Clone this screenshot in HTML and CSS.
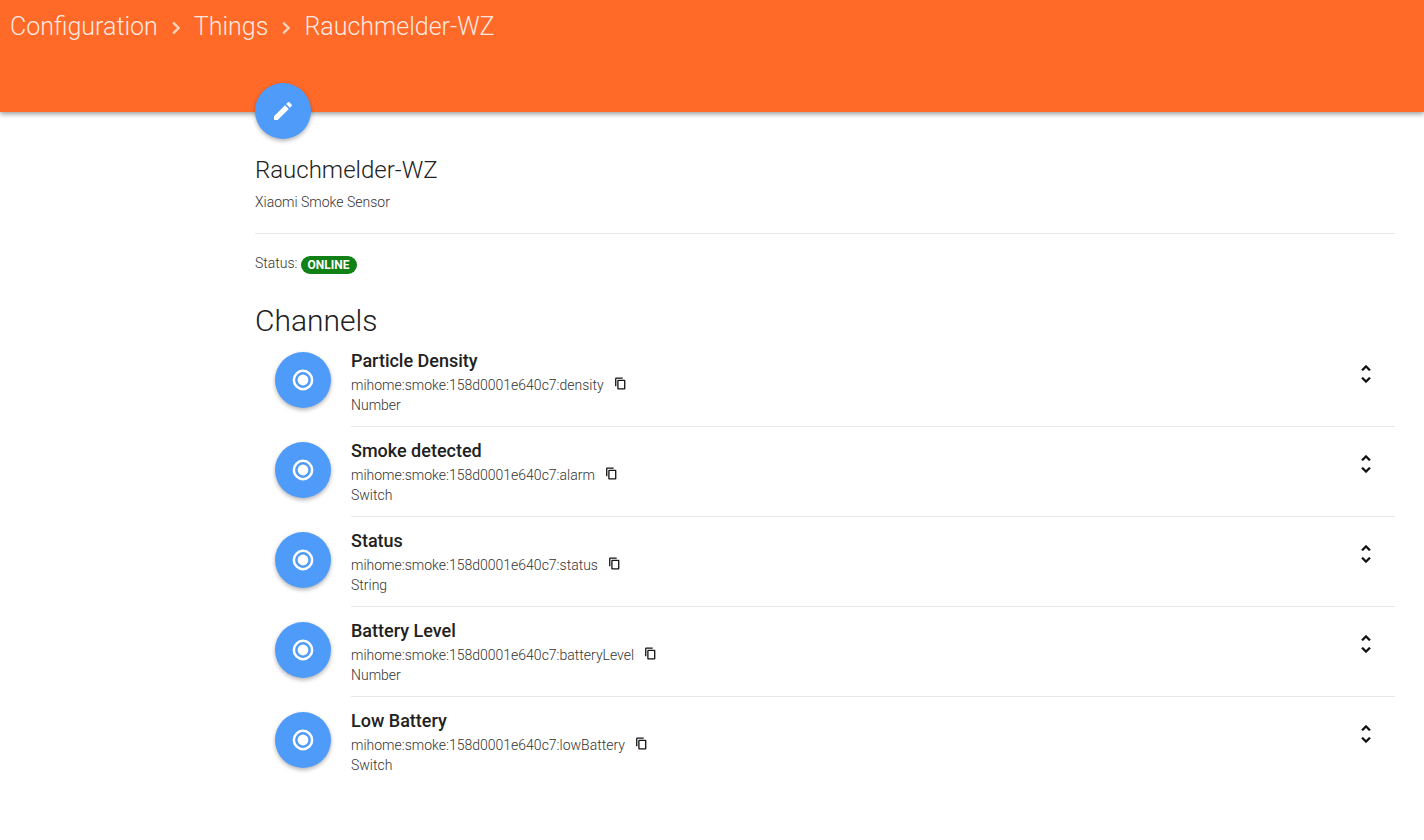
FILE: index.html
```html
<!DOCTYPE html>
<html lang="en">
<head>
<meta charset="utf-8">
<meta name="viewport" content="width=device-width, initial-scale=1">
<title>Rauchmelder-WZ</title>
<link rel="stylesheet" href="styles.css">
</head>
<body>
<svg class="sprite" aria-hidden="true">
  <symbol id="chevron" viewBox="0 0 24 24"><path d="M9.200 6.600l5.400 5.400-5.400 5.400" fill="none" stroke="currentColor" stroke-width="2.400"/></symbol>
  <symbol id="edit" viewBox="0 0 24 24"><path d="M3 17.250V21h3.750L17.810 9.940l-3.750-3.750L3 17.250zM20.710 7.040a1 1 0 0 0 0-1.410l-2.340-2.340a1 1 0 0 0-1.410 0l-1.830 1.830 3.750 3.750 1.830-1.830z"/></symbol>
  <symbol id="radio" viewBox="0 0 24 24"><circle cx="12" cy="12" r="5.400"/><path d="M12 1.600a10.400 10.400 0 1 0 0 20.800 10.400 10.400 0 0 0 0-20.800zm0 18.300a7.900 7.900 0 1 1 0-15.800 7.900 7.900 0 0 1 0 15.800z"/></symbol>
  <symbol id="copy" viewBox="0 0 24 24"><path d="M16 1H4a2 2 0 0 0-2 2v14h2.400V3.400H16V1zm3 4H8a2 2 0 0 0-2 2v14c0 1.100.9 2 2 2h11a2 2 0 0 0 2-2V7a2 2 0 0 0-2-2zm-.4 15.600H8.400V7.400h10.200v13.200z"/></symbol>
  <symbol id="unfold" viewBox="0 0 24 24"><path d="M12 5.830L15.170 9l1.410-1.410L12 3 7.410 7.590 8.830 9 12 5.830zm0 12.340L8.830 15l-1.410 1.410L12 21l4.590-4.590L15.170 15 12 18.170z" stroke="currentColor" stroke-width=".3"/></symbol>
</svg>
<header class="toolbar">
  <nav class="breadcrumb" aria-label="Breadcrumb">
    <a href="#">Configuration</a>
    <svg class="separator"><use href="#chevron"/></svg>
    <a href="#">Things</a>
    <svg class="separator"><use href="#chevron"/></svg>
    <a href="#">Rauchmelder-WZ</a>
  </nav>
</header>
<main class="content">
  <button class="fab edit" type="button" aria-label="Edit thing"><svg><use href="#edit"/></svg></button>
  <section class="summary">
    <h1>Rauchmelder-WZ</h1>
    <p>Xiaomi Smoke Sensor</p>
  </section>
  <p class="status">Status: <span class="badge">ONLINE</span></p>
  <h2>Channels</h2>
  <ul class="channels">
    <li class="channel">
      <button class="fab" type="button" aria-label="Link Particle Density"><svg><use href="#radio"/></svg></button>
      <div class="details">
        <div class="text">
          <h3>Particle Density</h3>
          <p class="uid">mihome:smoke:158d0001e640c7:density<button class="copy" type="button" aria-label="Copy"><svg><use href="#copy"/></svg></button></p>
          <p>Number</p>
        </div>
        <button class="expand" type="button" aria-label="Expand"><svg><use href="#unfold"/></svg></button>
      </div>
    </li>
    <li class="channel">
      <button class="fab" type="button" aria-label="Link Smoke detected"><svg><use href="#radio"/></svg></button>
      <div class="details">
        <div class="text">
          <h3>Smoke detected</h3>
          <p class="uid">mihome:smoke:158d0001e640c7:alarm<button class="copy" type="button" aria-label="Copy"><svg><use href="#copy"/></svg></button></p>
          <p>Switch</p>
        </div>
        <button class="expand" type="button" aria-label="Expand"><svg><use href="#unfold"/></svg></button>
      </div>
    </li>
    <li class="channel">
      <button class="fab" type="button" aria-label="Link Status"><svg><use href="#radio"/></svg></button>
      <div class="details">
        <div class="text">
          <h3>Status</h3>
          <p class="uid">mihome:smoke:158d0001e640c7:status<button class="copy" type="button" aria-label="Copy"><svg><use href="#copy"/></svg></button></p>
          <p>String</p>
        </div>
        <button class="expand" type="button" aria-label="Expand"><svg><use href="#unfold"/></svg></button>
      </div>
    </li>
    <li class="channel">
      <button class="fab" type="button" aria-label="Link Battery Level"><svg><use href="#radio"/></svg></button>
      <div class="details">
        <div class="text">
          <h3>Battery Level</h3>
          <p class="uid">mihome:smoke:158d0001e640c7:batteryLevel<button class="copy" type="button" aria-label="Copy"><svg><use href="#copy"/></svg></button></p>
          <p>Number</p>
        </div>
        <button class="expand" type="button" aria-label="Expand"><svg><use href="#unfold"/></svg></button>
      </div>
    </li>
    <li class="channel">
      <button class="fab" type="button" aria-label="Link Low Battery"><svg><use href="#radio"/></svg></button>
      <div class="details">
        <div class="text">
          <h3>Low Battery</h3>
          <p class="uid">mihome:smoke:158d0001e640c7:lowBattery<button class="copy" type="button" aria-label="Copy"><svg><use href="#copy"/></svg></button></p>
          <p>Switch</p>
        </div>
        <button class="expand" type="button" aria-label="Expand"><svg><use href="#unfold"/></svg></button>
      </div>
    </li>
  </ul>
</main>
</body>
</html>
```

FILE: styles.css
```css
* {
  box-sizing: border-box;
}

body {
  margin: 0;
  background: #fff;
  color: #212121;
  font: 300 14px/20px Roboto, sans-serif;
}

h1, h2, h3, p, ul {
  margin: 0;
  padding: 0;
}

p {
  color: #333;
}

button {
  display: flex;
  align-items: center;
  justify-content: center;
  flex: none;
  padding: 0;
  border: 0;
  background: none;
  color: #111;
  cursor: pointer;
}

svg {
  width: 24px;
  height: 24px;
  fill: currentColor;
}

.sprite {
  display: none;
}

.toolbar {
  height: 112px;
  padding: 11px 10px;
  background: #ff6a28;
  box-shadow: 0 2px 5px rgba(0, 0, 0, 0.4);
}

.breadcrumb {
  display: flex;
  align-items: center;
  font-size: 25px;
  line-height: 32px;
  color: rgba(255, 255, 255, 0.87);
}

.breadcrumb a {
  color: inherit;
  text-decoration: none;
}

.separator {
  margin: 2px 6px 0;
  opacity: 0.8;
}

.content {
  margin: -29px 29px 0 255px;
}

.fab {
  width: 56px;
  height: 56px;
  border-radius: 50%;
  background: #4f9bfa;
  color: #fff;
  box-shadow: 0 2px 4px rgba(0, 0, 0, 0.3);
}

.edit {
  position: relative;
}

.summary {
  padding: 15px 0 21px;
  border-bottom: 1px solid #e8e8e8;
}

h1 {
  font-size: 24px;
  font-weight: 300;
  line-height: 32px;
  margin-bottom: 6px;
}

.status {
  display: flex;
  align-items: flex-start;
  gap: 3px;
  margin-top: 19px;
}

.badge {
  margin-top: 3px;
  padding: 0 7px;
  border-radius: 9px;
  background: #118015;
  color: #fff;
  font-size: 12px;
  font-weight: 700;
  line-height: 18px;
}

h2 {
  margin-top: 27px;
  font-size: 30px;
  font-weight: 300;
  line-height: 40px;
}

.channels {
  list-style: none;
  margin-top: -5px;
}

.channel {
  display: flex;
  gap: 20px;
  padding-left: 20px;
}

.channel .fab {
  margin-top: 16px;
}

.details {
  display: flex;
  flex: 1;
  align-items: flex-start;
  justify-content: space-between;
  min-height: 90px;
  padding: 12px 17px 0 0;
  border-top: 1px solid #e8e8e8;
}

.channel:first-child .details {
  border-top-color: transparent;
}

h3 {
  margin-bottom: 2px;
  font-size: 18px;
  font-weight: 500;
  line-height: 24px;
}

.uid {
  display: flex;
  align-items: flex-start;
  gap: 10px;
}

.copy {
  padding-top: 2px;
}

.copy svg {
  width: 13px;
  height: 13px;
}

.expand {
  width: 24px;
  height: 50px;
}
```
